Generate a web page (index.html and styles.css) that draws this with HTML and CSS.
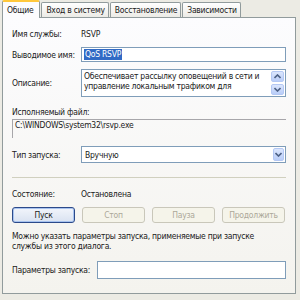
FILE: index.html
```html
<!DOCTYPE html>
<html lang="ru">
<head>
<meta charset="utf-8">
<link rel="stylesheet" href="styles.css">
</head>
<body>
<div class="dialog">
  <div class="tabs">
    <div class="tab active">Общие</div>
    <div class="tab">Вход в систему</div>
    <div class="tab">Восстановление</div>
    <div class="tab">Зависимости</div>
  </div>
  <div class="panel">
    <div class="row r-name"><span class="lbl">Имя службы:</span><span>RSVP</span></div>
    <div class="row r-disp"><span class="lbl">Выводимое имя:</span><div class="field"><span class="sel">QoS RSVP</span></div></div>
    <div class="row r-desc"><span class="lbl">Описание:</span>
      <div class="textarea">
        <div class="ta-text">Обеспечивает рассылку оповещений в сети и<br>управление локальным трафиком для</div>
        <div class="scroll">
          <div class="sbtn"><svg width="7" height="5" viewBox="0 0 7 5"><path d="M0.5 4 L3.5 1 L6.5 4" fill="none" stroke="#4d6185" stroke-width="1.6"/></svg></div>
          <div class="sbtn"><svg width="7" height="5" viewBox="0 0 7 5"><path d="M0.5 1 L3.5 4 L6.5 1" fill="none" stroke="#4d6185" stroke-width="1.6"/></svg></div>
        </div>
      </div>
    </div>
    <div class="exe-label">Исполняемый файл:</div>
    <div class="exe">C:\WINDOWS\system32\rsvp.exe</div>
    <div class="row r-type"><span class="lbl">Тип запуска:</span>
      <div class="combo"><span class="combo-text">Вручную</span>
        <div class="dd"><svg width="7" height="5" viewBox="0 0 7 5"><path d="M0.5 1 L3.5 4 L6.5 1" fill="none" stroke="#4d6185" stroke-width="1.6"/></svg></div>
      </div>
    </div>
    <div class="sep"></div>
    <div class="row r-state"><span class="lbl">Состояние:</span><span>Остановлена</span></div>
    <div class="buttons">
      <div class="btn default">Пуск</div>
      <div class="btn disabled">Стоп</div>
      <div class="btn disabled">Пауза</div>
      <div class="btn disabled">Продолжить</div>
    </div>
    <p class="hint">Можно указать параметры запуска, применяемые при запуске<br>службы из этого диалога.</p>
    <div class="row r-param"><span class="lbl2">Параметры запуска:</span><div class="input"></div></div>
  </div>
</div>
</body>
</html>
```
FILE: styles.css
```css
html, body {
  margin: 0;
  padding: 0;
  background: #ecebe4;
}
body {
  font-family: "DejaVu Sans Condensed", "DejaVu Sans", sans-serif;
  font-stretch: condensed;
  font-size: 8.5px;
  letter-spacing: -0.25px;
  color: #1a1a1a;
  width: 300px;
  height: 300px;
  overflow: hidden;
}
.dialog {
  padding: 0 0 0 2px;
}
.tabs {
  display: flex;
  height: 17px;
  align-items: flex-end;
}
.tab {
  height: 14px;
  line-height: 14px;
  padding: 0 3px 0 4px;
  border: 1px solid #919b9c;
  border-bottom: none;
  border-radius: 2px 2px 0 0;
  background: linear-gradient(#ffffff, #ecebe6);
  margin-right: 1px;
  white-space: nowrap;
}
.tab.active {
  height: 16px;
  line-height: 17px;
  background: #fcfcfe;
  border-top: 2px solid #ffc83c;
  margin-bottom: -1px;
  position: relative;
  z-index: 1;
  padding: 0 6px 0 4px;
}
.panel {
  height: 275px;
  border: 1px solid #919b9c;
  background: linear-gradient(#fcfcfe, #f4f3ee);
  padding: 0 9px;
  box-sizing: content-box;
  width: 274px;
}
.row {
  display: flex;
  align-items: center;
}
.lbl {
  width: 69px;
  flex: none;
  white-space: nowrap;
}
.r-name { height: 13px; margin-top: 9px; }
.r-disp { margin-top: 7px; }
.field {
  flex: 1;
  height: 13px;
  border: 1px solid #7f9db9;
  background: #fff;
  padding: 0 2px;
  display: flex;
  align-items: center;
}
.sel {
  background: #316ac5;
  color: #fff;
  line-height: 11px;
  padding: 0 1px;
}
.r-desc { margin-top: 7px; }
.textarea {
  flex: 1;
  height: 26px;
  border: 1px solid #7f9db9;
  background: #fff;
  display: flex;
}
.ta-text {
  flex: 1;
  padding: 1px 2px;
  line-height: 10px;
  white-space: nowrap;
  overflow: hidden;
}
.scroll {
  width: 13px;
  flex: none;
  display: flex;
  flex-direction: column;
  gap: 2px;
  padding: 1px 1px 0 0;
}
.sbtn {
  height: 11px;
  background: linear-gradient(#dbe6fd, #b9cdf8);
  border: 1px solid #b4c8f4;
  border-radius: 2px;
  display: flex;
  align-items: center;
  justify-content: center;
  box-sizing: border-box;
}
.exe-label {
  margin-top: 9px;
  height: 13px;
  line-height: 13px;
}
.exe {
  height: 18px;
  border-top: 1px solid #a7a6aa;
  border-left: 1px solid #a7a6aa;
  padding: 0 2px;
  line-height: 11px;
}
.r-type { margin-top: 8px; }
.combo {
  flex: 1;
  height: 15px;
  border: 1px solid #7f9db9;
  background: #fff;
  display: flex;
  align-items: center;
  padding-left: 3px;
}
.combo-text { flex: 1; }
.dd {
  width: 11px;
  height: 13px;
  margin-right: 1px;
  background: linear-gradient(#dbe6fd, #b9cdf8);
  border: 1px solid #b4c8f4;
  border-radius: 2px;
  display: flex;
  align-items: center;
  justify-content: center;
  box-sizing: border-box;
}
.sep {
  margin-top: 14px;
  height: 0;
  border-top: 1px solid #d0d0bf;
}
.r-state { margin-top: 9px; height: 13px; }
.buttons {
  display: flex;
  gap: 7px;
  margin-top: 7px;
}
.btn {
  width: 61px;
  height: 14px;
  line-height: 14px;
  text-align: center;
  border: 1px solid #003c74;
  border-radius: 3px;
  background: linear-gradient(#ffffff, #ecebe6);
}
.btn.default {
  border-color: #2c4a8a;
  background: linear-gradient(#f2f5fb, #d9e2f1);
  box-shadow: inset 0 0 0 1px #a8c3ef;
}
.btn.disabled {
  border-color: #c9c7ba;
  color: #aca899;
  background: #f5f4ea;
}
.hint {
  margin: 8px 0 0 0;
  line-height: 10px;
  white-space: nowrap;
}
.r-param { margin-top: 10px; }
.lbl2 { width: 85px; flex: none; white-space: nowrap; }
.input {
  flex: 1;
  height: 16px;
  border: 1px solid #7f9db9;
  background: #fff;
}
```
